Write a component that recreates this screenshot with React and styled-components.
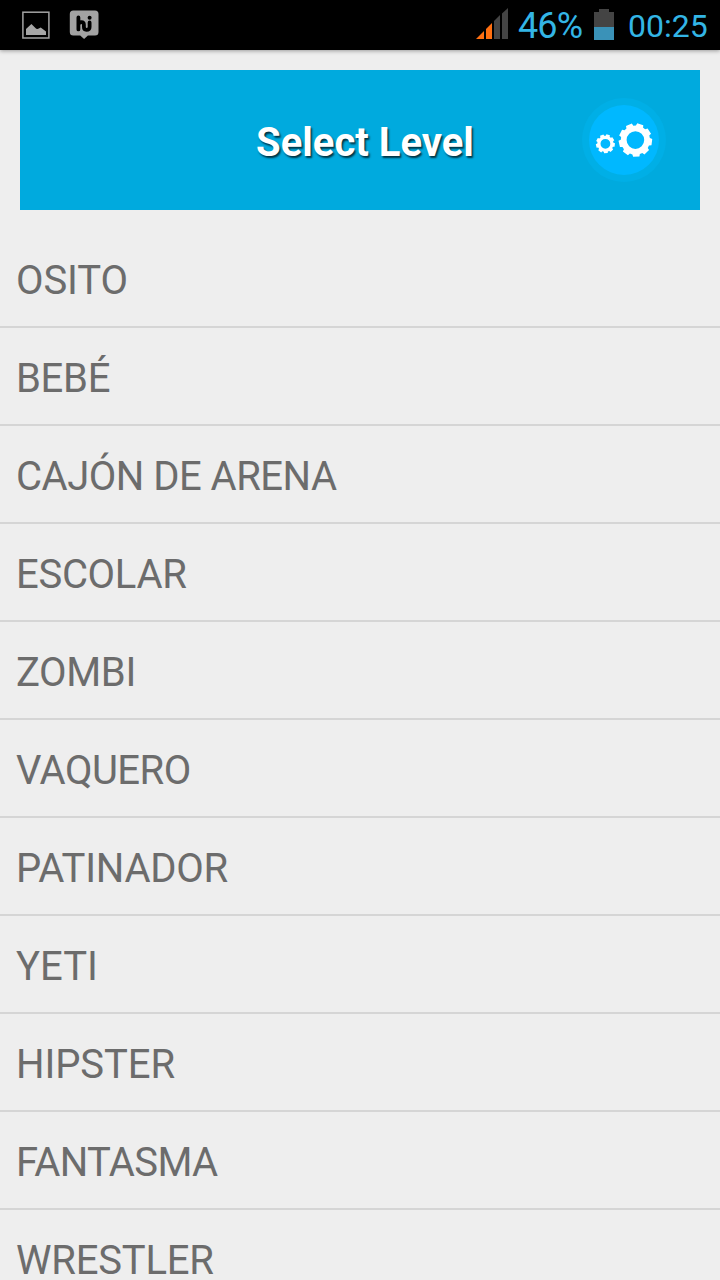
import React from 'react';
import styled, { createGlobalStyle } from 'styled-components';

const GlobalStyle = createGlobalStyle`
  * { box-sizing: border-box; }
  html, body { margin: 0; padding: 0; background: #eeeeee; }
  body { font-family: Roboto, "Liberation Sans", sans-serif; }
`;

const Screen = styled.div`
  width: 720px;
  height: 1280px;
  overflow: hidden;
  background: #eeeeee;
  display: flex;
  flex-direction: column;
`;

const StatusBar = styled.header`
  flex: none;
  height: 50px;
  padding: 0 12px 0 21px;
  background: #000;
  display: flex;
  align-items: center;
  justify-content: space-between;
  box-shadow: 0 1px 4px rgba(0, 0, 0, 0.35);
`;

const StatusGroup = styled.div`
  display: flex;
  align-items: center;
  height: 50px;
  padding-bottom: ${(p) => p.$lift || 0}px;
  gap: ${(p) => p.$gap || 0}px;
`;

const StatusText = styled.span`
  flex: none;
  color: #33b5e5;
  font-size: ${(p) => p.$size}px;
  line-height: 50px;
  letter-spacing: ${(p) => p.$spacing || 0}px;
  width: ${(p) => p.$width}px;
  margin-left: ${(p) => p.$left}px;
  padding-top: ${(p) => p.$drop || 0}px;
  white-space: nowrap;
`;

const Glyph = styled.svg`
  display: block;
  flex: none;
`;

const TitleBar = styled.div`
  flex: none;
  height: 140px;
  margin: 20px 20px 20px;
  padding: 0 34px 0 236px;
  background: #00aade;
  display: flex;
  align-items: center;
  justify-content: space-between;
`;

const Title = styled.h1`
  margin: 0;
  padding-top: 5px;
  color: #fff;
  font-size: 40px;
  line-height: 48px;
  font-weight: 700;
  white-space: nowrap;
  text-shadow: 1.5px 1.5px 2px rgba(0, 0, 0, 0.7);
`;

const SettingsButton = styled.button`
  width: 84px;
  height: 84px;
  padding: 0;
  border: 0;
  background: none;
`;

const LevelList = styled.ul`
  list-style: none;
  margin: 0;
  padding: 0;
`;

const LevelRow = styled.li`
  height: 98px;
  padding: 6px 16px 0;
  border-bottom: 2px solid #d5d5d5;
  display: flex;
  align-items: center;
  color: #6c6c6c;
  font-size: 40px;
  line-height: 48px;
  letter-spacing: ${(p) => p.$spacing || 0}px;
  white-space: nowrap;
`;

const levels = [
  { name: 'OSITO', spacing: -0.1 },
  { name: 'BEBÉ', spacing: -0.3 },
  { name: 'CAJÓN DE ARENA', spacing: -0.5 },
  { name: 'ESCOLAR', spacing: -0.3 },
  { name: 'ZOMBI', spacing: -0.35 },
  { name: 'VAQUERO', spacing: -0.5 },
  { name: 'PATINADOR', spacing: -0.25 },
  { name: 'YETI', spacing: 0 },
  { name: 'HIPSTER', spacing: -0.1 },
  { name: 'FANTASMA', spacing: -0.6 },
  { name: 'WRESTLER', spacing: -0.2 },
];

// Ring with square teeth; angles are in degrees, clockwise from the x axis.
function gearPath(cx, cy, outer, root, hole, teeth, start) {
  const step = 360 / teeth;
  const at = (r, deg) => {
    const a = (deg * Math.PI) / 180;
    return `${(cx + r * Math.cos(a)).toFixed(2)} ${(cy + r * Math.sin(a)).toFixed(2)}`;
  };
  const points = [];
  for (let i = 0; i < teeth; i += 1) {
    const c = start + i * step;
    points.push(at(root, c - step * 0.37), at(outer, c - step * 0.27));
    points.push(at(outer, c + step * 0.27), at(root, c + step * 0.37));
  }
  return (
    `M${points.join('L')}Z` +
    `M${cx - hole} ${cy}a${hole} ${hole} 0 1 0 ${hole * 2} 0a${hole} ${hole} 0 1 0 ${-hole * 2} 0Z`
  );
}

const PictureIcon = () => (
  <Glyph width="30" height="30" viewBox="0 0 30 30">
    <rect x="1.9" y="2.2" width="26" height="25.8" fill="none" stroke="#a3a3a3" strokeWidth="1.5" />
    <path d="M5 25v-6l5.400-5 4.800 4.800 1.500.3 3-1.600 5.300 4V25z" fill="#a6a6a6" />
  </Glyph>
);

const HikeIcon = () => (
  <Glyph width="30" height="30" viewBox="0 0 30 30">
    <path
      d="M4.300.6h21.700a3.500 3.500 0 0 1 3.500 3.500v18a3.500 3.500 0 0 1-3.500 3.500H18.900L15.100 29 11.200 25.600H4.300A3.500 3.500 0 0 1 .8 22.100v-18A3.500 3.500 0 0 1 4.300.6z"
      fill="#a3a3a3"
    />
    <path
      d="M9.400 7.500V19.400M9.400 14.800q.6-2.600 3-2.600 2.500 0 2.500 2.600v2.300q0 2.700 2.500 2.700 3.200 0 3.200-2.900V12.500"
      fill="none"
      stroke="#000"
      strokeWidth="3.800"
      strokeLinecap="round"
    />
    <circle cx="20.600" cy="7.700" r="2" fill="#000" />
  </Glyph>
);

const SignalIcon = () => (
  <Glyph width="33" height="32" viewBox="0 0 33 32">
    <path d="M0 31 8 23v8z" fill="#ff6f10" />
    <path d="M10 21 16 15v16h-6z" fill="#ff6f10" />
    <path d="M18 13 24 7v24h-6z" fill="#444" />
    <path d="M26 5.500 32 0v31h-6z" fill="#444" />
  </Glyph>
);

const BatteryIcon = () => (
  <Glyph width="20" height="32" viewBox="0 0 20 32">
    <path d="M0 4h5V1h10v3h5v15H0z" fill="#444" />
    <path d="M0 19h20v13H0z" fill="#3a92b8" />
  </Glyph>
);

const GearsIcon = () => (
  <Glyph width="84" height="84" viewBox="0 0 84 84">
    <circle cx="42" cy="42" r="42" fill="#00afe6" />
    <circle cx="42" cy="42" r="35" fill="#00b8ff" />
    <g fill="#fff" fillRule="evenodd">
      <path d={gearPath(53.4, 42.1, 16.9, 14.6, 8.8, 9, -73)} />
      <path d={gearPath(23.4, 45.8, 9.6, 8.1, 4.9, 9, -73)} />
    </g>
  </Glyph>
);

export default function App() {
  return (
    <Screen>
      <GlobalStyle />
      <StatusBar>
        <StatusGroup $gap={18}>
          <PictureIcon />
          <HikeIcon />
        </StatusGroup>
        <StatusGroup $lift={2}>
          <SignalIcon />
          <StatusText $size={36} $spacing={-0.9} $width={76} $left={9} $drop={4}>46%</StatusText>
          <BatteryIcon />
          <StatusText $size={32} $width={80} $left={14} $drop={4}>00:25</StatusText>
        </StatusGroup>
      </StatusBar>
      <TitleBar>
        <Title>Select Level</Title>
        <SettingsButton aria-label="Settings">
          <GearsIcon />
        </SettingsButton>
      </TitleBar>
      <LevelList>
        {levels.map((level) => (
          <LevelRow key={level.name} $spacing={level.spacing}>
            {level.name}
          </LevelRow>
        ))}
      </LevelList>
    </Screen>
  );
}
